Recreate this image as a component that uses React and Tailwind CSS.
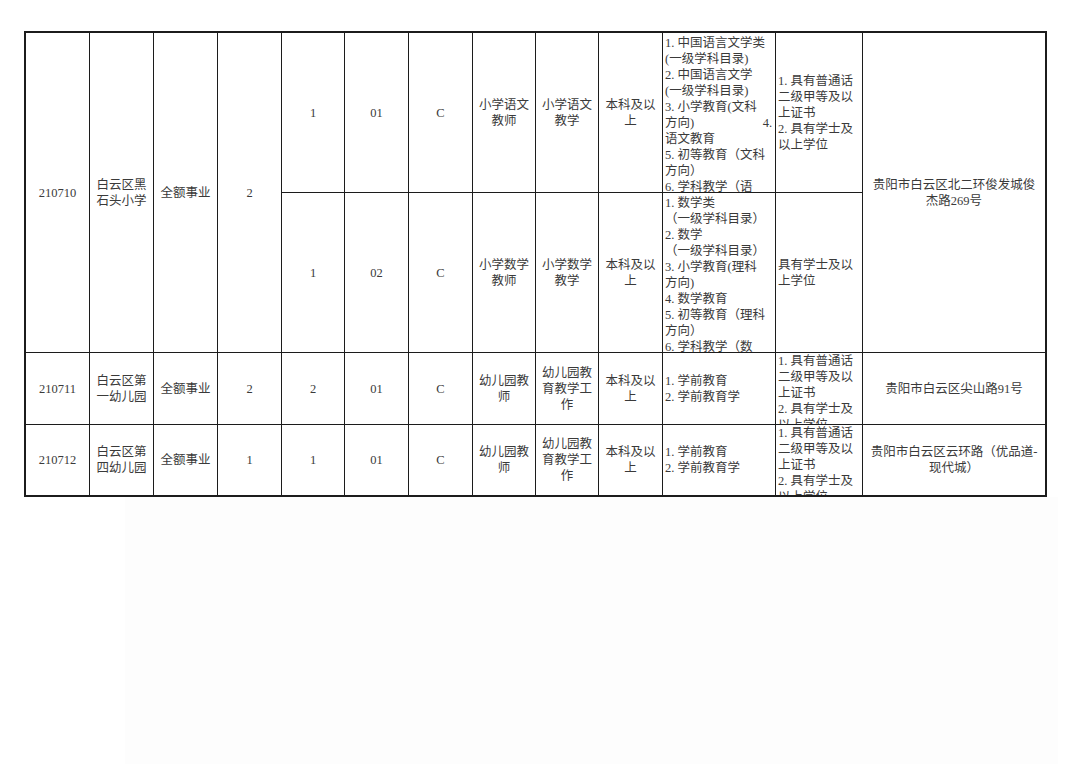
import React from "react";

const FONT = { fontFamily: "'Liberation Serif', 'Noto Sans CJK SC', serif" };

function C({ children, span, align = "center", top = false, cls = "" }) {
  return (
    <div
      className={
        "bg-white overflow-hidden flex flex-col text-[12.5px] leading-[16px] text-[#3a3a3a] " +
        (span ? "row-span-2 " : "") +
        (top ? "justify-start pt-0 " : "justify-center ") +
        (align === "center" ? "items-center text-center " : "items-stretch text-left pl-[2px] pr-[3px] ") +
        cls
      }
    >
      {children}
    </div>
  );
}

function Lines({ lines }) {
  return (
    <div>
      {lines.map((l, i) => (
        <div key={i} className="whitespace-nowrap">
          {l}
        </div>
      ))}
    </div>
  );
}

export default function App() {
  return (
    <div className="w-[1080px] h-[764px] bg-white overflow-hidden" style={FONT}>
      <div className="pt-[31px] pl-[24px]">
        <div className="grid w-max border-2 border-[#1c1c1c] bg-[#1c1c1c] gap-px grid-cols-[63px_63px_63px_63px_62px_63px_63px_62px_62px_63px_112px_86px_182px] grid-rows-[159px_159px_71px_70px]">
          {/* Row 1 */}
          <C span>210710</C>
          <C span>
            <Lines lines={["白云区黑", "石头小学"]} />
          </C>
          <C span>全额事业</C>
          <C span>2</C>
          <C>1</C>
          <C>01</C>
          <C>C</C>
          <C>
            <Lines lines={["小学语文", "教师"]} />
          </C>
          <C>
            <Lines lines={["小学语文", "教学"]} />
          </C>
          <C>
            <Lines lines={["本科及以", "上"]} />
          </C>
          <C align="left" top cls="pt-[2px]">
            <div className="whitespace-nowrap">1. 中国语言文学类</div>
            <div className="whitespace-nowrap">(一级学科目录)</div>
            <div className="whitespace-nowrap">2. 中国语言文学</div>
            <div className="whitespace-nowrap">(一级学科目录)</div>
            <div className="whitespace-nowrap">3. 小学教育(文科</div>
            <div className="flex justify-between whitespace-nowrap">
              <span>方向)</span>
              <span>4.</span>
            </div>
            <div className="whitespace-nowrap">语文教育</div>
            <div className="whitespace-nowrap">5. 初等教育（文科</div>
            <div className="whitespace-nowrap">方向）</div>
            <div className="whitespace-nowrap">6. 学科教学（语</div>
          </C>
          <C align="left">
            <Lines lines={["1. 具有普通话", "二级甲等及以", "上证书", "2. 具有学士及", "以上学位"]} />
          </C>
          <C span>
            <Lines lines={["贵阳市白云区北二环俊发城俊", "杰路269号"]} />
          </C>

          {/* Row 2 */}
          <C>1</C>
          <C>02</C>
          <C>C</C>
          <C>
            <Lines lines={["小学数学", "教师"]} />
          </C>
          <C>
            <Lines lines={["小学数学", "教学"]} />
          </C>
          <C>
            <Lines lines={["本科及以", "上"]} />
          </C>
          <C align="left" top cls="pt-[2px]">
            <Lines
              lines={[
                "1. 数学类",
                "（一级学科目录）",
                "2. 数学",
                "（一级学科目录）",
                "3. 小学教育(理科",
                "方向)",
                "4. 数学教育",
                "5. 初等教育（理科",
                "方向）",
                "6. 学科教学（数",
              ]}
            />
          </C>
          <C align="left">
            <Lines lines={["具有学士及以", "上学位"]} />
          </C>

          {/* Row 3 */}
          <C>210711</C>
          <C>
            <Lines lines={["白云区第", "一幼儿园"]} />
          </C>
          <C>全额事业</C>
          <C>2</C>
          <C>2</C>
          <C>01</C>
          <C>C</C>
          <C>
            <Lines lines={["幼儿园教", "师"]} />
          </C>
          <C>
            <Lines lines={["幼儿园教", "育教学工", "作"]} />
          </C>
          <C>
            <Lines lines={["本科及以", "上"]} />
          </C>
          <C align="left">
            <Lines lines={["1. 学前教育", "2. 学前教育学"]} />
          </C>
          <C align="left" top>
            <Lines lines={["1. 具有普通话", "二级甲等及以", "上证书", "2. 具有学士及", "以上学位"]} />
          </C>
          <C>贵阳市白云区尖山路91号</C>

          {/* Row 4 */}
          <C>210712</C>
          <C>
            <Lines lines={["白云区第", "四幼儿园"]} />
          </C>
          <C>全额事业</C>
          <C>1</C>
          <C>1</C>
          <C>01</C>
          <C>C</C>
          <C>
            <Lines lines={["幼儿园教", "师"]} />
          </C>
          <C>
            <Lines lines={["幼儿园教", "育教学工", "作"]} />
          </C>
          <C>
            <Lines lines={["本科及以", "上"]} />
          </C>
          <C align="left">
            <Lines lines={["1. 学前教育", "2. 学前教育学"]} />
          </C>
          <C align="left" top>
            <Lines lines={["1. 具有普通话", "二级甲等及以", "上证书", "2. 具有学士及", "以上学位"]} />
          </C>
          <C>
            <Lines lines={["贵阳市白云区云环路（优品道-", "现代城）"]} />
          </C>
        </div>
        <div className="ml-[101px] w-[933px] h-[270px] bg-[#fdfdfd]" />
      </div>
    </div>
  );
}
